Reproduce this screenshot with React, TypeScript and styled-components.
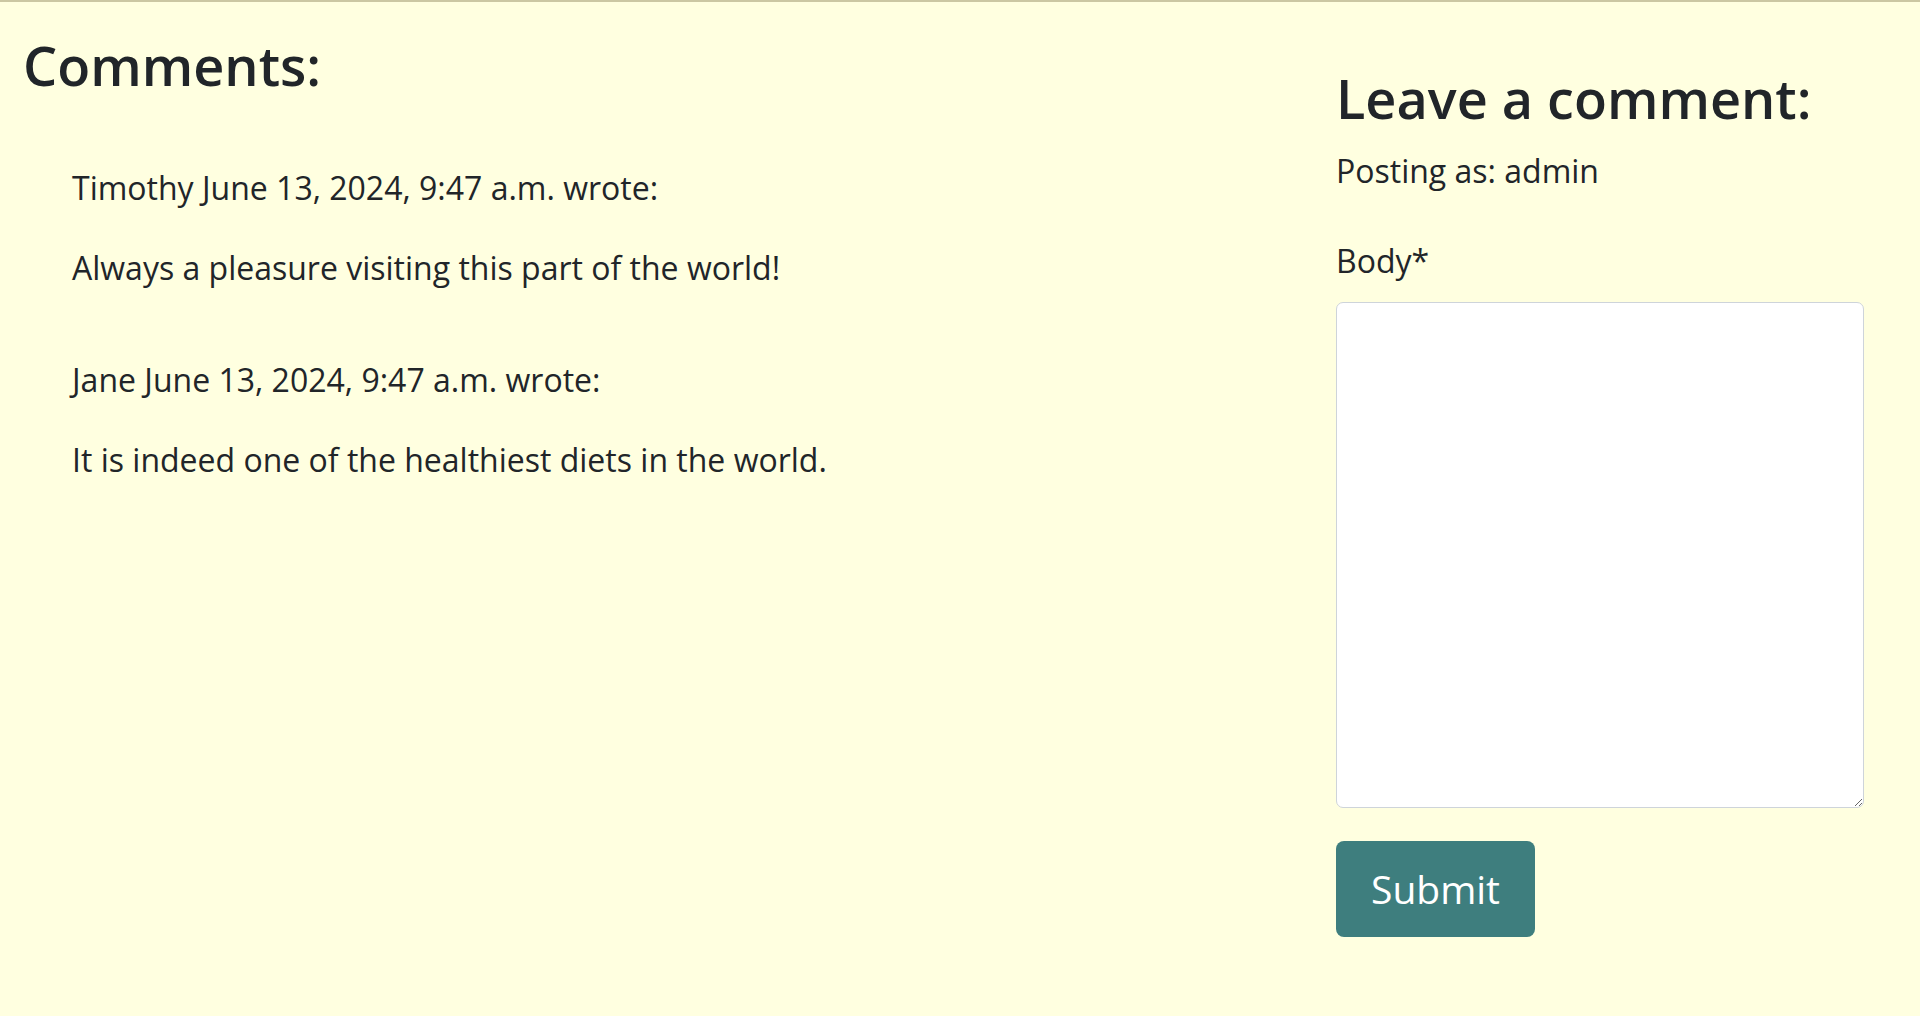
import styled, { createGlobalStyle } from "styled-components";

const GlobalStyle = createGlobalStyle`
  html, body {
    margin: 0;
    padding: 0;
    background: #ffffe0;
  }
  body {
    font-family: "Open Sans", "Noto Sans", sans-serif;
    color: #212529;
  }
  * {
    box-sizing: border-box;
  }
`;

const TopRule = styled.div`
  height: 2px;
  background: #cbc7a3;
`;

const Page = styled.main`
  display: flex;
  align-items: flex-start;
  padding: 0 56px 0 23px;
  min-height: 1014px;
`;

const CommentsColumn = styled.section`
  flex: 1;
  padding-top: 31px;
`;

const FormColumn = styled.section`
  width: 528px;
  padding-top: 64px;
`;

const Heading = styled.h3<{ $gap: number }>`
  margin: 0 0 ${(p) => p.$gap}px;
  font-size: 54px;
  font-weight: 600;
  line-height: 1.2;
`;

const CommentList = styled.div`
  display: flex;
  flex-direction: column;
  gap: 64px;
  padding-left: 49px;
`;

const Comment = styled.article`
  display: flex;
  flex-direction: column;
  gap: 32px;
`;

const Text = styled.p`
  margin: 0;
  font-size: 32px;
  line-height: 48px;
`;

const Form = styled.form`
  display: flex;
  flex-direction: column;
`;

const Label = styled.label`
  margin: 42px 0 17px;
  font-size: 32px;
  line-height: 48px;
`;

const TextArea = styled.textarea`
  display: block;
  width: 100%;
  height: 506px;
  padding: 12px 18px;
  border: 1.5px solid #ced4da;
  border-radius: 7px;
  background: #fff;
  font: inherit;
  font-size: 32px;
  resize: vertical;
`;

const SubmitButton = styled.button`
  align-self: flex-start;
  margin-top: 33px;
  padding: 18px 35px;
  border: none;
  border-radius: 8px;
  background: #3e7e7e;
  color: #fff;
  font-family: "Open Sans", "Noto Sans", sans-serif;
  font-size: 39px;
  line-height: 60px;
  cursor: pointer;
`;

const comments = [
  {
    author: "Timothy",
    date: "June 13, 2024, 9:47 a.m.",
    body: "Always a pleasure visiting this part of the world!",
  },
  {
    author: "Jane",
    date: "June 13, 2024, 9:47 a.m.",
    body: "It is indeed one of the healthiest diets in the world.",
  },
];

export default function App() {
  return (
    <>
      <GlobalStyle />
      <TopRule />
      <Page>
        <CommentsColumn>
          <Heading $gap={66}>Comments:</Heading>
          <CommentList>
            {comments.map((c) => (
              <Comment key={c.author}>
                <Text>
                  {c.author} {c.date} wrote:
                </Text>
                <Text>{c.body}</Text>
              </Comment>
            ))}
          </CommentList>
        </CommentsColumn>
        <FormColumn>
          <Heading $gap={16}>Leave a comment:</Heading>
          <Text>Posting as: admin</Text>
          <Form onSubmit={(e) => e.preventDefault()}>
            <Label htmlFor="id_body">Body*</Label>
            <TextArea id="id_body" name="body" required />
            <SubmitButton type="submit">Submit</SubmitButton>
          </Form>
        </FormColumn>
      </Page>
    </>
  );
}
